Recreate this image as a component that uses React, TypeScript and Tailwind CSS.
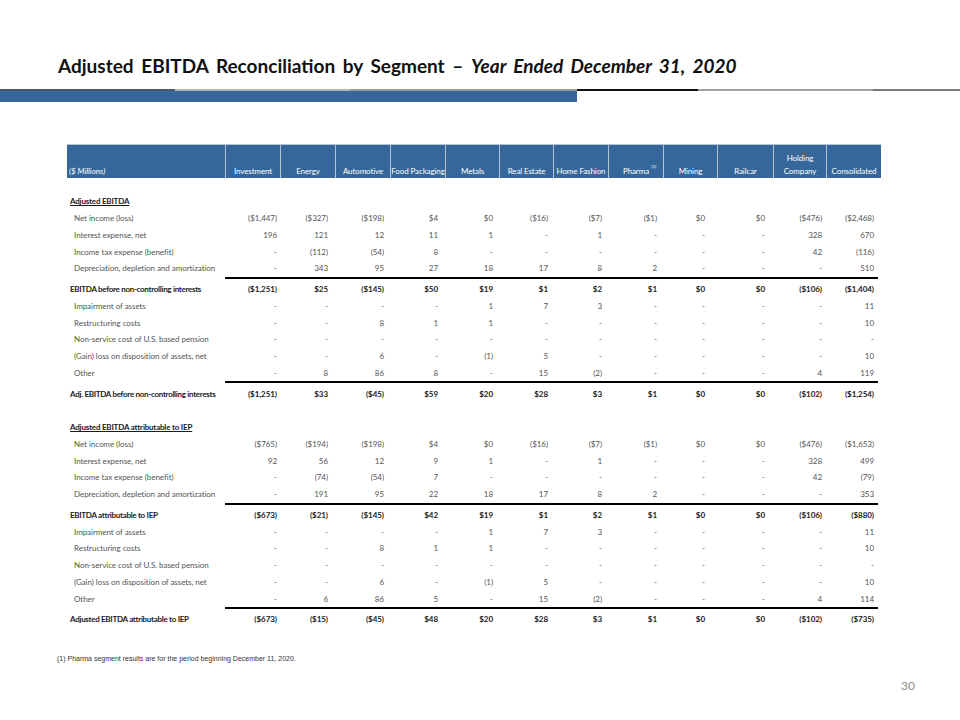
import React from "react";

const GRID =
  "grid grid-cols-[158px_55px_55px_55px_55px_54px_54px_55px_55px_54px_56px_53px_55px]";

const PR = [
  "pr-[3px]",
  "pr-[7px]",
  "pr-[6px]",
  "pr-[7px]",
  "pr-[6px]",
  "pr-[5px]",
  "pr-[6px]",
  "pr-[6px]",
  "pr-[12px]",
  "pr-[8px]",
  "pr-[4px]",
  "pr-[7px]",
];

type Row =
  | { kind: "section"; label: string }
  | { kind: "detail"; label: string; values: string[] }
  | { kind: "total"; label: string; values: string[] }
  | { kind: "line" }
  | { kind: "blank" };

const d = (s: string) => s.split(" ");

const rows: Row[] = [
  { kind: "section", label: "Adjusted EBITDA" },
  { kind: "detail", label: "Net income (loss)", values: d("($1,447) ($327) ($198) $4 $0 ($16) ($7) ($1) $0 $0 ($476) ($2,468)") },
  { kind: "detail", label: "Interest expense, net", values: d("196 121 12 11 1 - 1 - - - 328 670") },
  { kind: "detail", label: "Income tax expense (benefit)", values: d("- (112) (54) 8 - - - - - - 42 (116)") },
  { kind: "detail", label: "Depreciation, depletion and amortization", values: d("- 343 95 27 18 17 8 2 - - - 510") },
  { kind: "line" },
  { kind: "total", label: "EBITDA before non-controlling interests", values: d("($1,251) $25 ($145) $50 $19 $1 $2 $1 $0 $0 ($106) ($1,404)") },
  { kind: "detail", label: "Impairment of assets", values: d("- - - - 1 7 3 - - - - 11") },
  { kind: "detail", label: "Restructuring costs", values: d("- - 8 1 1 - - - - - - 10") },
  { kind: "detail", label: "Non-service cost of U.S. based pension", values: d("- - - - - - - - - - - -") },
  { kind: "detail", label: "(Gain) loss on disposition of assets, net", values: d("- - 6 - (1) 5 - - - - - 10") },
  { kind: "detail", label: "Other", values: d("- 8 86 8 - 15 (2) - - - 4 119") },
  { kind: "line" },
  { kind: "total", label: "Adj. EBITDA before non-controlling interests", values: d("($1,251) $33 ($45) $59 $20 $28 $3 $1 $0 $0 ($102) ($1,254)") },
  { kind: "blank" },
  { kind: "section", label: "Adjusted EBITDA attributable to IEP" },
  { kind: "detail", label: "Net income (loss)", values: d("($765) ($194) ($198) $4 $0 ($16) ($7) ($1) $0 $0 ($476) ($1,653)") },
  { kind: "detail", label: "Interest expense, net", values: d("92 56 12 9 1 - 1 - - - 328 499") },
  { kind: "detail", label: "Income tax expense (benefit)", values: d("- (74) (54) 7 - - - - - - 42 (79)") },
  { kind: "detail", label: "Depreciation, depletion and amortization", values: d("- 191 95 22 18 17 8 2 - - - 353") },
  { kind: "line" },
  { kind: "total", label: "EBITDA attributable to IEP", values: d("($673) ($21) ($145) $42 $19 $1 $2 $1 $0 $0 ($106) ($880)") },
  { kind: "detail", label: "Impairment of assets", values: d("- - - - 1 7 3 - - - - 11") },
  { kind: "detail", label: "Restructuring costs", values: d("- - 8 1 1 - - - - - - 10") },
  { kind: "detail", label: "Non-service cost of U.S. based pension", values: d("- - - - - - - - - - - -") },
  { kind: "detail", label: "(Gain) loss on disposition of assets, net", values: d("- - 6 - (1) 5 - - - - - 10") },
  { kind: "detail", label: "Other", values: d("- 6 86 5 - 15 (2) - - - 4 114") },
  { kind: "line" },
  { kind: "total", label: "Adjusted EBITDA attributable to IEP", values: d("($673) ($15) ($45) $48 $20 $28 $3 $1 $0 $0 ($102) ($735)") },
];

const headers = [
  "Investment",
  "Energy",
  "Automotive",
  "Food Packaging",
  "Metals",
  "Real Estate",
  "Home Fashion",
  "PHARMA",
  "Mining",
  "Railcar",
  "HOLDING",
  "Consolidated",
];

function HeaderCell({ h }: { h: string }) {
  let content: React.ReactNode = h;
  if (h === "PHARMA") {
    content = (
      <span className="relative">
        Pharma
        <span className="absolute -right-[7px] -top-[2px] text-[4.5px] leading-[5px]">(1)</span>
      </span>
    );
  } else if (h === "HOLDING") {
    content = (
      <span className="flex flex-col items-center">
        <span>Holding</span>
        <span className="mt-[2px]">Company</span>
      </span>
    );
  }
  return (
    <div className="flex items-end justify-center pb-[1px] border-l border-[#b9c3cd] text-white text-[8px] leading-[11px] whitespace-nowrap tracking-[-0.1px]">
      {content}
    </div>
  );
}

function DataRow({ row }: { row: Row }) {
  if (row.kind === "line") {
    return (
      <div className="h-[4px] pl-[158px] pr-[3px]">
        <div className="h-[2px] bg-black" />
      </div>
    );
  }
  if (row.kind === "blank") {
    return <div className="h-[16.75px]" />;
  }
  if (row.kind === "section") {
    return (
      <div className="h-[16.75px] flex items-center pl-[3px] text-[8px] font-bold text-[#1a1a1a] underline underline-offset-[1px] tracking-[-0.2px]">
        {row.label}
      </div>
    );
  }
  const bold = row.kind === "total";
  return (
    <div
      className={`${GRID} h-[16.75px] items-center text-[8px] tracking-[-0.05px] ${
        bold ? "font-bold text-[#1a1a1a]" : "text-[#555555]"
      }`}
    >
      <div className={`whitespace-nowrap ${bold ? "pl-[3px] tracking-[-0.3px]" : "pl-[7px]"}`}>{row.label}</div>
      {row.values.map((v, i) => (
        <div key={i} className={`text-right whitespace-nowrap ${PR[i]}`}>
          {v}
        </div>
      ))}
    </div>
  );
}

export default function App() {
  return (
    <div className="w-[960px] h-[720px] bg-white overflow-hidden font-['Lato',sans-serif] text-black">
      <div className="h-[89px] pt-[55px] pl-[58px]">
        <h1 className="text-[19px] leading-[22px] font-bold text-[#111] whitespace-nowrap [word-spacing:3px]">
          Adjusted EBITDA Reconciliation by Segment – <span className="italic">Year Ended December 31, 2020</span>
        </h1>
      </div>
      <div className="flex h-[2px]">
        <div className="w-[175px] bg-[#4a5a6a]" />
        <div className="w-[175px] bg-[#b5b5b5]" />
        <div className="w-[227px] bg-[#9a9a9a]" />
        <div className="w-[121px] bg-[#111111]" />
        <div className="w-[175px] bg-[#a0a0a0]" />
        <div className="flex-1 bg-[#7a7a7a]" />
      </div>
      <div className="w-[577px] h-[11px] bg-[#35679a]" />

      <div className="mt-[42px] ml-[67px] w-[814px]">
        <div className={`${GRID} h-[34px] bg-[#35679a] border-t border-[#b9c3cd]`}>
          <div className="flex items-end pb-[1px] pl-[2px] text-white text-[8px] leading-[11px] italic">
            ($ Millions)
          </div>
          {headers.map((h) => (
            <HeaderCell key={h} h={h} />
          ))}
        </div>
        <div className="h-[15px]" />
        {rows.map((r, i) => (
          <DataRow key={i} row={r} />
        ))}
      </div>

      <div className="mt-[26px] pl-[57px] font-['Liberation_Sans',sans-serif] text-[7px] leading-[10px] text-[#333]">
        (1) Pharma segment results are for the period beginning December 11, 2020.
      </div>
      <div className="mt-[15px] pr-[45px] text-right text-[12px] leading-[14px] text-[#8a8a8a]">30</div>
    </div>
  );
}
